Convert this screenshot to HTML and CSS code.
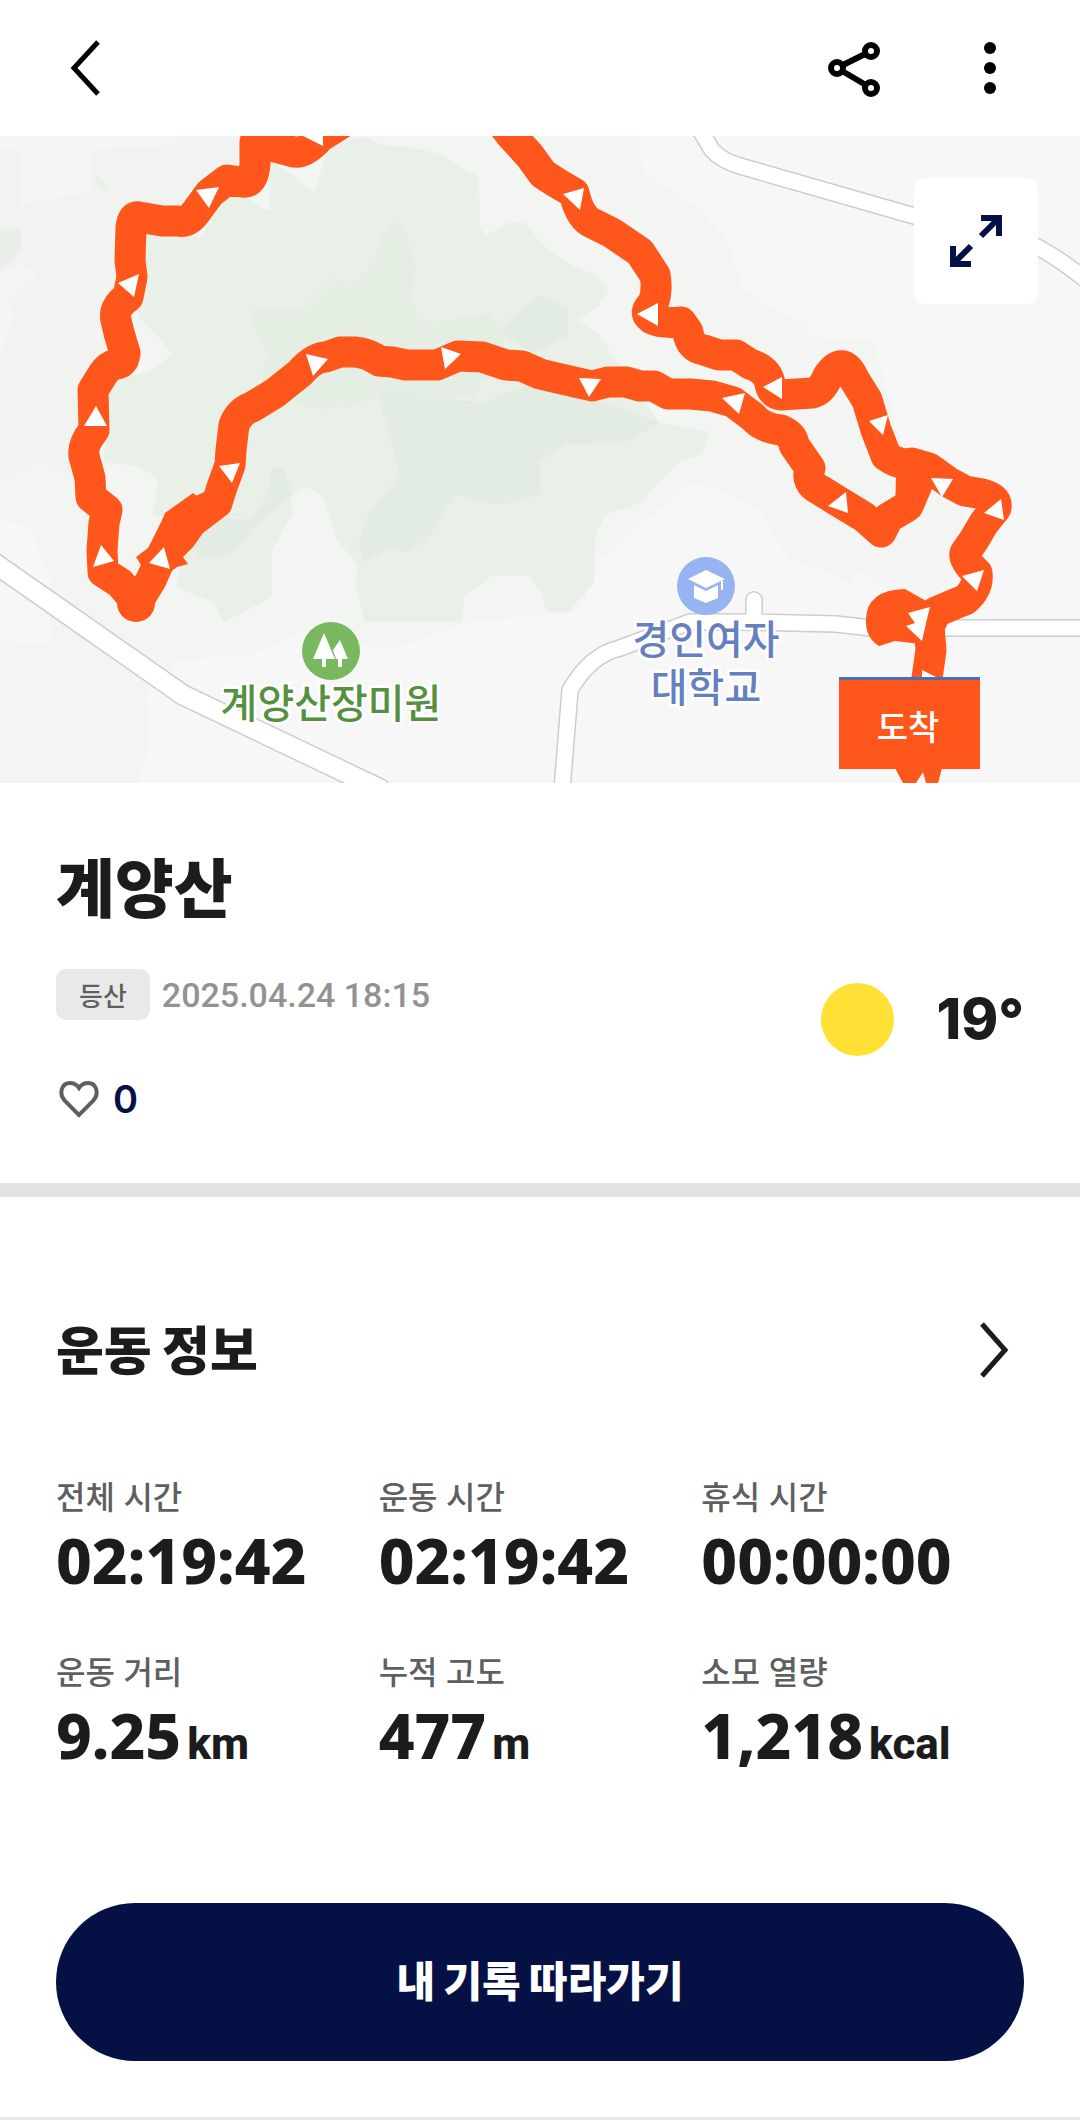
FILE: index.html
```html
<!DOCTYPE html>
<html lang="ko">
<head>
  <meta charset="UTF-8">
  <meta name="viewport" content="width=device-width, initial-scale=1.0">
  <title>계양산</title>
  <link rel="stylesheet" href="styles.css">
</head>
<body>
  <header class="top-bar">
    <button class="icon-button" type="button" aria-label="뒤로">
      <svg width="60" height="60" viewBox="0 0 60 60"><path class="line" d="M44 4 20 30l24 26"/></svg>
    </button>
    <div class="top-actions">
      <button class="icon-button share" type="button" aria-label="공유">
        <svg width="60" height="60" viewBox="0 0 60 60">
          <path class="line" d="M12 30 46 13M12 30l34 20"/>
          <circle class="node" cx="12" cy="30" r="6"/>
          <circle class="node" cx="46" cy="13" r="6"/>
          <circle class="node" cx="46" cy="50" r="6"/>
        </svg>
      </button>
      <button class="icon-button" type="button" aria-label="더보기">
        <svg width="60" height="60" viewBox="0 0 60 60">
          <circle cx="30" cy="10" r="6"/><circle cx="30" cy="30" r="6"/><circle cx="30" cy="50" r="6"/>
        </svg>
      </button>
    </div>
  </header>

  <main>
    <div class="map">
      <svg class="map-canvas" viewBox="0 136 1080 647" preserveAspectRatio="xMidYMid slice">
        <!-- terrain -->
        <path fill="#f3f5f2" d="M0 136H638L643 173 671 190 702 210 726 240 738 270 743 290 774 310 807 323V337L874 340 900 440 960 480 970 560 930 600 882 587 860 570 850 582 790 558 775 540 763 510 740 500 720 490 690 482 670 500 640 525 600 560 580 612 470 622 390 650 300 632 250 655 180 660 148 690 150 740 138 783H0V640L50 645 50 575 30 530 0 517Z"/>
        <path fill="#f1f3f0" d="M0 136H270L240 200 130 215 125 330 80 400 75 480 40 460 0 480Z"/>
        <path fill="#f4f5f4" d="M0 136H176L178 145 90 150 92 190 78 194 20 205V150H0ZM0 275 20 264 37 275 8 300 15 315 0 355Z"/>
        <path fill="#e9efe8" d="M0 229H21V251L0 271ZM95 172 109 188 103 190 96 183Z"/>
        <path fill="#e9f0e8" d="M330 143 365 137 382 145 410 147 437 153 479 177 480 227 486 236 506 223 527 223 540 243 571 265 592 273 609 290 598 307 576 320 598 333 616 360 660 423 710 432 702 455 681 460 640 503 605 515 595 537 594 583 568 612H547L540 590 530 576H492L465 595 461 622H365L355 583 358 565 337 540 324 500Q306 478 291 497L293 513 272 550V597L224 622 213 602 176 587 190 520 153 515 158 483Q150 463 103 463L110 413 107 393 120 378 145 373 172 355 155 333 138 317 146 233 200 237 227 197 248 198 265 210H270V160L315 192 324 160Z"/>
        <path fill="#e5eee3" d="M398 220 405 230 415 263 413 297 418 323 492 313 501 333 510 370 482 380 475 397 379 397 348 407 317 410 293 403 262 380 267 353 250 317Q250 300 300 310L334 277 355 282 375 263 380 237Z"/>
        <path fill="#e3ece3" d="M379 397 399 385 420 397 485 402 540 380 600 400 660 423 622 443 568 444 540 460V495L500 505 455 495 430 535 410 553 388 548 365 563 358 545 368 515 400 475 390 440ZM501 333 513 316 540 295 568 308V335L540 351 530 352Z"/>
        <path fill="#e3ece3" d="M272 468H283L293 495 250 530Q235 565 200 557L190 545 222 518 250 520 268 495Z"/>

        <!-- roads -->
        <g class="road-edge">
          <path d="M700 130 712 150Q722 161 740 166L914 216 1000 235Q1030 235 1090 283"/>
          <path class="wide" d="M-10 560 183 695 380 789"/>
          <path d="M562 790 570 690Q590 655 620 648L690 622H747L836 624 871 628H1090M754 622V600"/>
        </g>
        <g class="road">
          <path d="M700 130 712 150Q722 161 740 166L914 216 1000 235Q1030 235 1090 283"/>
          <path class="wide" d="M-10 560 183 695 380 789"/>
          <path d="M562 790 570 690Q590 655 620 648L690 622H747L836 624 871 628H1090M754 622V600"/>
        </g>

        <!-- recorded route -->
        <path class="track" d="M350 118 320 137Q305 154 294 152L275 147 255 142 255 163Q254 184 242 182L227 180 210 193 196 212Q188 223 178 221L162 221 139 217Q132 215 131 228L130 260 132 277 128 297Q113 307 116 320L119 333 125 353Q124 364 116 364 108 366 103 374L93 390 94 430Q82 445 84 456L90 478 91 497 107 510 104 523 102 550 103 572 120 583 137 603 151 580 162 555 176 527 196 513 217 503 222 487 230 465 231 450 234 425Q240 411 252 407L275 393 300 373Q314 357 326 357L340 352 355 352Q368 353 379 361L392 362 406 365 437 365 458 356 482 357 506 365 522 366 540 374 557 378 592 386 608 382 626 382 640 386 654 386 668 394 690 394 712 396 733 402 753 417Q762 428 781 430 793 435 794 445L810 468Q805 483 820 490L836 500 864 517 881 532 888 518 908 506 919 480 925 465"/>
        <path class="track" d="M498 118 510 134 530 156 543 174 557 183 574 193Q580 218 592 223L612 233 640 252 655 275Q658 290 653 304 642 312 652 319 662 324 681 322L688 332Q690 348 704 350L719 355 736 355 750 364Q768 370 770 384 772 394 781 395L812 393Q822 391 828 376 843 354 854 379L867 400 876 430Q882 445 886 456 900 466 912 463L929 468 950 483 965 491 977 493Q998 496 996 508L984 523 974 540 965 553Q963 560 977 573 979 588 965 600L957 603 936 612 929 627 931 650 926 685"/>
        <path fill="#ff561c" d="M866 622Q865 590 905 589L935 606 930 645 895 641 879 646Q866 638 866 622ZM165 513 193 493 224 517 203 533 193 547 183 557 188 564 177 567 160 580 148 560 141 565 136 557 152 545ZM885 460 925 470 925 500 895 515 896 475Z"/>
        <circle fill="#ff561c" cx="136" cy="603" r="19"/>
        <path class="arrows" d="M303 136 323 134 323 146ZM196 190 219 187 209 208ZM118 283 139 274 134 297ZM96 406 84 426 107 426ZM306 354 328 359 313 376ZM441 347 461 354 445 369ZM563 194 584 188 580 210ZM637 314 658 303 658 326ZM763 387 782 377 782 399ZM869 421 888 415 883 435ZM579 378 601 379 589 397ZM722 398 745 393 739 414ZM219 466 240 463 232 483ZM101 545 93 567 114 561ZM164 547 149 563 170 569ZM931 478 953 479 942 497ZM984 513 1001 499 1004 520ZM962 576 984 570 977 591ZM828 506 846 492 848 513ZM908 613 930 607 926 623 922 641 906 626 915 623ZM922 670 936 677 922 677Z"/>

        <!-- places -->
        <circle fill="#78b95f" cx="331" cy="651" r="29"/>
        <path fill="#fff" d="M324 633 335 659H326V667H322V659H313ZM340 640 348 659H342V667H338V659H336L333 650Z"/>
        <text class="place park" x="331" y="718">계양산장미원</text>
        <circle fill="#96b3f2" cx="706" cy="586" r="29"/>
        <path fill="#fff" d="M688 579 706 570 725 579 706 588ZM694 585 706 591 718 585V598L706 603 694 598ZM721 581H723V590H721Z"/>
        <text class="place school"><tspan x="706" y="654">경인여자</tspan><tspan x="706" y="702">대학교</tspan></text>

        <path fill="#ff561c" d="M895 768H942L938 783H926L923 772 916 783H903Z"/>
        <rect fill="#ff561c" x="839" y="678" width="141" height="91"/>
        <rect fill="#4470bb" x="839" y="677" width="141" height="3"/>
        <text class="finish" x="908" y="740">도착</text>
      </svg>
      <button class="expand-button" type="button" aria-label="지도 확대">
        <svg width="52" height="52" viewBox="0 0 52 52">
          <path d="M31 3H49M49 0V21M47 5 31 21M21 49H0M3 52V31M5 47 21 31"/>
        </svg>
      </button>
    </div>

    <section class="summary">
      <h1>계양산</h1>
      <div class="summary-row">
        <div>
          <div class="meta">
            <span class="tag">등산</span>
            <time datetime="2025-04-24T18:15">2025.04.24 18:15</time>
          </div>
          <button class="like" type="button" aria-label="좋아요 0">
            <svg width="46" height="46" viewBox="0 0 46 46"><path d="M23 39 9 25C2 17 6 7 14 7c4 0 7 2 9 5 2-3 5-5 9-5 8 0 12 10 5 18Z"/></svg>
            <span>0</span>
          </button>
        </div>
        <div class="weather">
          <span class="sun"></span>
          <span>19°</span>
        </div>
      </div>
    </section>

    <section class="workout">
      <div class="workout-head">
        <h2>운동 정보</h2>
        <a href="#detail" aria-label="운동 정보 상세">
          <svg width="60" height="60" viewBox="0 0 60 60"><path class="line" d="M18 2 41 28 18 54"/></svg>
        </a>
      </div>
      <dl class="stats">
        <div><dt>전체 시간</dt><dd>02:19:42</dd></div>
        <div><dt>운동 시간</dt><dd>02:19:42</dd></div>
        <div><dt>휴식 시간</dt><dd>00:00:00</dd></div>
        <div><dt>운동 거리</dt><dd>9.25<span class="unit">km</span></dd></div>
        <div><dt>누적 고도</dt><dd>477<span class="unit">m</span></dd></div>
        <div><dt>소모 열량</dt><dd>1,218<span class="unit">kcal</span></dd></div>
      </dl>
      <button class="follow-button" type="button">내 기록 따라가기</button>
    </section>
  </main>
</body>
</html>
```
FILE: styles.css
```css
* {
  box-sizing: border-box;
}

body {
  margin: 0;
  background-color: #fff;
  color: #1c1c1c;
  font-family: Inter, 'Noto Sans CJK KR', sans-serif;
}

button {
  padding: 0;
  border: 0;
  background: none;
  font-family: inherit;
  cursor: pointer;
}

svg {
  display: block;
}

.line {
  fill: none;
  stroke: currentColor;
  stroke-width: 5;
}

.top-bar {
  display: flex;
  align-items: center;
  justify-content: space-between;
  height: 136px;
  padding: 0 60px 0 54px;
}

.top-actions {
  display: flex;
  gap: 75px;
}

.icon-button {
  color: #000;
}

.share .line,
.node {
  stroke-width: 6;
}

.node {
  fill: #fff;
  stroke: #000;
}

/* map */
.map {
  position: relative;
}

.map-canvas {
  width: 100%;
  height: 647px;
  background-color: #f7f7f7;
}

.road-edge,
.road {
  fill: none;
  stroke: #cdcdcd;
  stroke-width: 18;
  stroke-linecap: round;
}

.road-edge .wide {
  stroke-width: 22;
}

.road {
  stroke: #fff;
  stroke-width: 15;
}

.road .wide {
  stroke-width: 19;
}

.track {
  fill: none;
  stroke: #ff561c;
  stroke-width: 31;
  stroke-linejoin: round;
}

.arrows {
  fill: #fff;
}

.place,
.finish {
  font-family: 'Noto Sans CJK KR', sans-serif;
  font-size: 40px;
  font-weight: 500;
  text-anchor: middle;
}

.place {
  stroke: #fff;
  stroke-width: 5;
  paint-order: stroke;
}

.park {
  fill: #55903f;
}

.school {
  fill: #6480be;
}

.finish {
  font-size: 34px;
  fill: #fff;
}

.expand-button {
  position: absolute;
  top: 42px;
  right: 42px;
  display: grid;
  place-items: center;
  width: 124px;
  height: 126px;
  border-radius: 10px;
  background-color: #fff;
}

.expand-button path {
  fill: none;
  stroke: #051144;
  stroke-width: 6;
}

/* title, date, weather */
.summary {
  padding: 68px 56px 60px;
  border-bottom: 14px solid #e2e2e2;
}

h1 {
  margin: 0 0 42px;
  font-size: 64px;
  line-height: 76px;
  font-weight: 900;
}

.summary-row {
  display: flex;
  justify-content: space-between;
}

.meta {
  display: flex;
  align-items: center;
  gap: 12px;
  color: #929292;
  font-family: Roboto, sans-serif;
  font-size: 34px;
  font-weight: 500;
}

.tag {
  padding: 0 23px;
  border-radius: 10px;
  background-color: #e9e9e9;
  color: #5f5f5f;
  font-family: 'Noto Sans CJK KR', sans-serif;
  font-size: 26px;
  line-height: 51px;
}

.like {
  display: flex;
  align-items: center;
  gap: 11px;
  margin-top: 55px;
  color: #051144;
  font-size: 38px;
  line-height: 48px;
  font-weight: 600;
}

.like path {
  fill: none;
  stroke: #5f5f5f;
  stroke-width: 4;
}

.weather {
  display: flex;
  align-items: center;
  align-self: flex-start;
  gap: 42px;
  padding-top: 14px;
  font-size: 56px;
  line-height: 73px;
  font-weight: 800;
}

.sun {
  width: 73px;
  height: 73px;
  border-radius: 50%;
  background-color: #ffe135;
}

/* workout numbers */
.workout {
  padding: 123px 56px 56px;
  border-bottom: 3px solid #e9e9e9;
}

.workout-head {
  display: flex;
  align-items: center;
  justify-content: space-between;
  margin-bottom: 94px;
}

.workout-head a {
  color: inherit;
}

h2 {
  margin: 0;
  font-size: 52px;
  line-height: 64px;
  font-weight: 900;
}

.stats {
  display: grid;
  grid-template-columns: repeat(3, 1fr);
  row-gap: 61px;
  margin: 0 0 136px;
}

dt {
  margin-bottom: 10px;
  color: #5f5f5f;
  font-size: 32px;
  line-height: 40px;
  font-weight: 500;
}

dd {
  margin: 0;
  font-family: 'Noto Sans', sans-serif;
  font-size: 62px;
  line-height: 64px;
  font-weight: 800;
  white-space: nowrap;
}

.unit {
  margin-left: 6px;
  font-family: Roboto, sans-serif;
  font-size: 44px;
  line-height: 44px;
}

.follow-button {
  width: 100%;
  border-radius: 79px;
  background-color: #051144;
  color: #fff;
  font-size: 42px;
  line-height: 158px;
  font-weight: 900;
}
```
